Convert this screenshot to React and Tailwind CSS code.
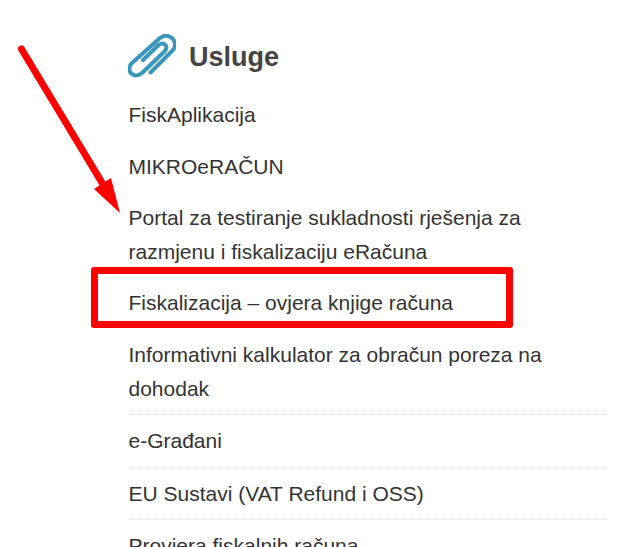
const rows = [
  { label: 'FiskAplikacija' },
  { label: 'MIKROeRAČUN' },
  { label: 'Portal za testiranje sukladnosti rješenja za razmjenu i fiskalizaciju eRačuna' },
  { label: 'Fiskalizacija – ovjera knjige računa' },
  { label: 'Informativni kalkulator za obračun poreza na dohodak', line: true },
  { label: 'e-Građani', line: true },
  { label: 'EU Sustavi (VAT Refund i OSS)', line: true },
  { label: 'Provjera fiskalnih računa' },
];

function Paperclip() {
  return (
    <svg width="48" height="46" viewBox="5 4 48 46" fill="none" stroke="#3a96bb" strokeWidth="4" strokeLinecap="round" strokeLinejoin="round">
      <path d="M27.500 42.500 L50 20 C53 16 52.500 11 49 8 C45 5 41 5 37 8 L9 33 C5 37 6 42 9 44 C12 46.500 16 45.500 19 43 L41 22 C44 19 44 16 42 14.500 C40 13 37 13.500 35 15.500 L20 30" />
    </svg>
  );
}

export default function App() {
  return (
    <div className="relative h-[547px] w-[642px] overflow-hidden bg-white font-['Liberation_Sans',Arial,sans-serif] text-[#333]">
      <div className="ml-[128px] w-[480px] pt-[34px]">
        <div className="flex h-[46px] items-center gap-[13px]">
          <Paperclip />
          <h2 className="text-[27px] font-bold text-[#444]">Usluge</h2>
        </div>
        <ul className="mt-[9px] ml-[0.5px]">
          {rows.map((row) => (
            <li
              key={row.label}
              className={`py-[9px] text-[21px] leading-[1.6] ${row.line ? 'border-b border-dotted border-[#ddd]' : ''}`}
            >
              {row.label}
            </li>
          ))}
        </ul>
      </div>

      {/* annotations on top of the screenshot */}
      <svg className="absolute top-0 left-0" width="642" height="547" fill="none">
        <path d="M21.500 49 L104 186" stroke="#ff0000" strokeWidth="7" strokeLinecap="round" />
        <path d="M120 213 L94 189 L111 178 Z" fill="#ff0000" />
      </svg>
      <div className="absolute top-[267px] left-[91px] h-[61px] w-[422px] rounded-[3px] border-[7px] border-[#ff0000]" />
    </div>
  );
}
